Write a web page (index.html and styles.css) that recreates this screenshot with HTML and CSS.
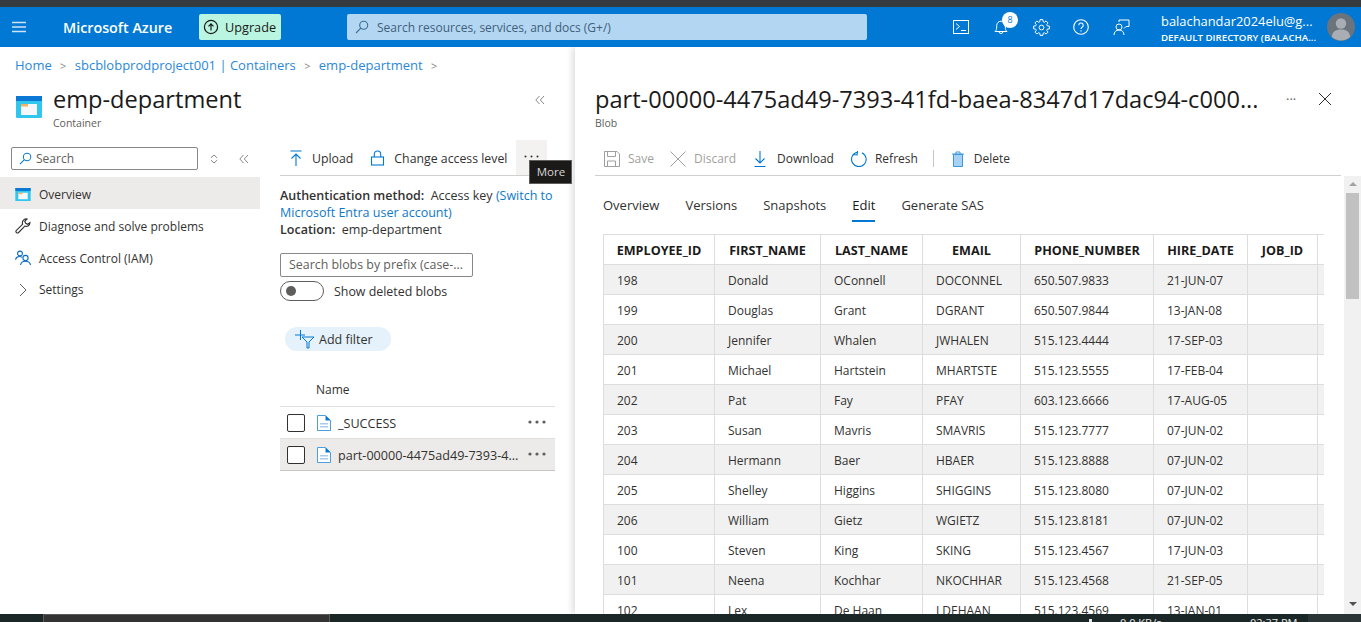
FILE: index.html
```html
<!DOCTYPE html>
<html lang="en">
<head>
  <meta charset="UTF-8">
  <title>emp-department - Microsoft Azure</title>
  <link rel="stylesheet" href="styles.css">
</head>
<body>
  <div class="topstrip"></div>
  <header class="topbar">
    <button class="hamburger" aria-label="Menu">
      <svg width="16" height="12" viewBox="0 0 16 12"><path d="M1 1.5h14M1 6h14M1 10.5h14" stroke="#cfe4f7" stroke-width="1.4"/></svg>
    </button>
    <div class="brand">Microsoft Azure</div>
    <div class="upgrade">
      <svg width="16" height="16" viewBox="0 0 16 16" fill="none" stroke="#1b1a19" stroke-width="1.2"><circle cx="8" cy="8" r="6.6"/><path d="M8 11.5V5M5.5 7.4 8 4.9l2.5 2.5"/></svg>
      <span>Upgrade</span>
    </div>
    <div class="globalsearch">
      <svg width="14" height="14" viewBox="0 0 14 14" fill="none" stroke="#3d6c94" stroke-width="1.1"><circle cx="8.7" cy="5.3" r="4"/><path d="M5.8 8.2 1 13"/></svg>
      <span>Search resources, services, and docs (G+/)</span>
    </div>
    <div class="topicons">
      <div class="topicon">
        <svg width="16" height="14" viewBox="0 0 16 14" fill="none" stroke="#fff" stroke-width="1"><rect x=".5" y=".5" width="15" height="13"/><path d="M3 3.5 6.5 6.5 3 9.5M8 10.5h5"/></svg>
      </div>
      <div class="topicon bell">
        <svg width="14" height="16" viewBox="0 0 14 16" fill="none" stroke="#fff" stroke-width="1"><path d="M1 12.5c1.3-1.2 1.7-2.4 1.7-4.5V6.5a4.3 4.3 0 0 1 8.6 0V8c0 2.1 .4 3.3 1.7 4.500zM5 12.5a2 2 0 0 0 4 0"/></svg>
        <span class="badge">8</span>
      </div>
      <div class="topicon">
        <svg width="17" height="17" viewBox="-8.5 -8.5 17 17" fill="none" stroke="#fff" stroke-width="1"><circle r="2.4"/><path d="M-1.66-5.77-1.39-7.88 1.39-7.88 1.66-5.77 2.91-5.25 4.59-6.55 6.55-4.59 5.25-2.91 5.77-1.66 7.88-1.39 7.88 1.39 5.77 1.66 5.25 2.91 6.55 4.59 4.59 6.55 2.91 5.25 1.66 5.77 1.39 7.88-1.39 7.88-1.66 5.77-2.91 5.25-4.59 6.55-6.55 4.59-5.25 2.91-5.77 1.66-7.88 1.39-7.88-1.39-5.77-1.66-5.25-2.91-6.55-4.59-4.59-6.55-2.91-5.25z" stroke-linejoin="round"/></svg>
      </div>
      <div class="topicon">
        <svg width="16" height="16" viewBox="0 0 16 16" fill="none" stroke="#fff" stroke-width="1.1"><circle cx="8" cy="8" r="7.3"/><path d="M5.8 6.2a2.200 2.200 0 1 1 3.400 1.900c-.8 .5-1.200 1-1.200 1.900"/><path d="M8 11.300v1.200"/></svg>
      </div>
      <div class="topicon">
        <svg width="17" height="17" viewBox="0 0 17 17" fill="none" stroke="#fff" stroke-width="1"><circle cx="6" cy="8" r="3"/><path d="M1 16c0-3 2-5 5-5s5 2 5 5M6 3V1h10v6.500h-3l-2 2"/></svg>
      </div>
    </div>
    <div class="account">
      <div class="account-name">balachandar2024elu@g...</div>
      <div class="account-dir">DEFAULT DIRECTORY (BALACHA...</div>
    </div>
    <div class="avatar">
      <svg width="28" height="28" viewBox="0 0 28 28"><circle cx="14" cy="14" r="14" fill="#6b737c"/><circle cx="14" cy="10.5" r="5.2" fill="#a9aeb4"/><path d="M4.800 24c.6-5.200 3.500-7.500 9.200-7.500s8.600 2.300 9.200 7.500a14 14 0 0 1-18.400 0z" fill="#a9aeb4"/></svg>
    </div>
  </header>

  <div class="main">
    <div class="leftside">
      <nav class="breadcrumb">
        <a>Home</a><span class="sep">&gt;</span>
        <a>sbcblobprodproject001 | Containers</a><span class="sep">&gt;</span>
        <a>emp-department</a><span class="sep">&gt;</span>
      </nav>
      <div class="bladehead">
        <svg class="bladeicon" width="26" height="22" viewBox="0 0 26 22"><rect width="26" height="22" rx="1" fill="#2fc7ee"/><rect width="26" height="5" fill="#0a78d4"/><rect x="5" y="8" width="16" height="11" fill="#f5f7f8"/><rect x="5" y="8" width="7" height="2.5" fill="#f2b25f"/></svg>
        <div class="bladetitle">
          <h1>emp-department</h1>
          <div class="subtitle">Container</div>
        </div>
        <div class="collapse">
          <svg width="10" height="10" viewBox="0 0 10 10" fill="none" stroke="#8a8886"><path d="M4.5 1 .8 5l3.700 4M9 1 5.300 5 9 9"/></svg>
        </div>
      </div>
      <div class="blade">
        <aside class="menu">
          <div class="menusearch">
            <div class="searchbox">
              <svg width="13" height="13" viewBox="0 0 14 14" fill="none" stroke="#0078d4" stroke-width="1.1"><circle cx="8.7" cy="5.3" r="4"/><path d="M5.8 8.2 1 13"/></svg>
              <span>Search</span>
            </div>
            <svg class="updown" width="8" height="10" viewBox="0 0 8 10" fill="none" stroke="#8a8886"><path d="M1 3.800 4 1l3 2.800M1 6.200 4 9l3-2.800"/></svg>
            <svg class="chev2" width="10" height="10" viewBox="0 0 10 10" fill="none" stroke="#8a8886"><path d="M4.5 1 .8 5l3.700 4M9 1 5.300 5 9 9"/></svg>
          </div>
          <div class="menuitem selected">
            <svg width="16" height="13" viewBox="0 0 26 22"><rect width="26" height="22" fill="#2fc7ee"/><rect width="26" height="5" fill="#0a78d4"/><rect x="5" y="8" width="16" height="11" fill="#f5f7f8"/><rect x="5" y="8" width="7" height="2.5" fill="#f2b25f"/></svg>
            <span>Overview</span>
          </div>
          <div class="menuitem">
            <svg width="16" height="16" viewBox="0 0 16 16" fill="none" stroke="#323130" stroke-width="1.1"><path d="M15 4.500a3.800 3.800 0 0 1-5.200 3.600L3.600 14.500a1.500 1.500 0 0 1-2.200-2.100l6.300-6.200A3.800 3.800 0 0 1 12 1l-2.300 2.300 1 2 2 1z"/></svg>
            <span>Diagnose and solve problems</span>
          </div>
          <div class="menuitem">
            <svg width="16" height="16" viewBox="0 0 16 16" fill="none" stroke="#0a6cc4" stroke-width="1.1"><circle cx="5" cy="3.5" r="2.4"/><path d="M.5 9.500c.5-2 2-3 4-3 1 0 1.800 .2 2.500 .8"/><circle cx="10.5" cy="8" r="2.6"/><path d="M5.500 15c.4-2.500 2.300-3.800 5-3.800s4.600 1.300 5 3.800"/></svg>
            <span>Access Control (IAM)</span>
          </div>
          <div class="menuitem short">
            <svg class="chevron" width="8" height="14" viewBox="0 0 8 14" fill="none" stroke="#605e5c" stroke-width="1"><path d="M1 1l6 6-6 6"/></svg>
            <span>Settings</span>
          </div>
        </aside>

        <section class="content">
          <div class="cmdbar">
            <div class="cmd">
              <svg width="14" height="16" viewBox="0 0 14 16" fill="none" stroke="#0078d4" stroke-width="1.1"><path d="M1.500 1h11M7 16V4M2.500 8.500 7 4l4.500 4.500"/></svg>
              <span>Upload</span>
            </div>
            <div class="cmd">
              <svg width="15" height="16" viewBox="0 0 15 16" fill="none" stroke="#0078d4" stroke-width="1.1"><rect x="1.5" y="7" width="12" height="8"/><path d="M4.300 7V4.200a3.200 3.200 0 0 1 6.400 0V7"/></svg>
              <span>Change access level</span>
            </div>
            <div class="cmd more">
              <svg width="15" height="3" viewBox="0 0 15 3" fill="#323130"><circle cx="1.5" cy="1.5" r="1"/><circle cx="7.5" cy="1.5" r="1"/><circle cx="13.5" cy="1.5" r="1"/></svg>
              <div class="tooltip">More</div>
            </div>
          </div>
          <div class="authinfo">
            <div><b>Authentication method:</b>&nbsp; Access key <a>(Switch to</a></div>
            <div><a>Microsoft Entra user account)</a></div>
            <div><b>Location:</b>&nbsp; emp-department</div>
          </div>
          <div class="prefix">Search blobs by prefix (case-...</div>
          <div class="toggleline">
            <span class="toggle"><i></i></span>
            <span>Show deleted blobs</span>
          </div>
          <div class="addfilter">
            <svg width="20" height="19" viewBox="0 0 20 19" fill="none" stroke="#0078d4" stroke-width="1"><path d="M5.500 0v10M0 5h10M7 7h12l-5 5v6h-2v-6z"/></svg>
            <span>Add filter</span>
          </div>
          <div class="bloblist">
            <div class="blobhead">Name</div>
            <div class="blobrow">
              <span class="check"></span>
              <svg width="14" height="16" viewBox="0 0 14 16"><path d="M.5 .5h8l5 5v10H.5z" fill="#fff" stroke="#4a9fe3"/><path d="M8.500 .5v5h5z" fill="#0a78d4"/><path d="M3 8h8v1.500H3zM3 11h8v1.500H3z" fill="#a6cdf0"/></svg>
              <span class="blobname">_SUCCESS</span>
              <svg class="dots" width="18" height="4" viewBox="0 0 18 4" fill="#605e5c"><circle cx="2" cy="2" r="1.600"/><circle cx="9" cy="2" r="1.600"/><circle cx="16" cy="2" r="1.600"/></svg>
            </div>
            <div class="blobrow selected">
              <span class="check"></span>
              <svg width="14" height="16" viewBox="0 0 14 16"><path d="M.5 .5h8l5 5v10H.5z" fill="#fff" stroke="#4a9fe3"/><path d="M8.500 .5v5h5z" fill="#0a78d4"/><path d="M3 8h8v1.500H3zM3 11h8v1.500H3z" fill="#a6cdf0"/></svg>
              <span class="blobname">part-00000-4475ad49-7393-4...</span>
              <svg class="dots" width="18" height="4" viewBox="0 0 18 4" fill="#605e5c"><circle cx="2" cy="2" r="1.600"/><circle cx="9" cy="2" r="1.600"/><circle cx="16" cy="2" r="1.600"/></svg>
            </div>
          </div>
        </section>
      </div>
    </div>

    <section class="panel">
      <div class="panelhead">
        <div class="paneltitle">
          <h2>part-00000-4475ad49-7393-41fd-baea-8347d17dac94-c000...</h2>
          <div class="subtitle">Blob</div>
        </div>
        <span class="panelmore">···</span>
        <svg class="panelclose" width="14" height="14" viewBox="0 0 14 14" fill="none" stroke="#323130"><path d="M1 1l12 12M13 1 1 13"/></svg>
      </div>
      <div class="paneltools">
        <div class="tool off">
          <svg width="16" height="16" viewBox="0 0 16 16" fill="none" stroke="#a19f9d"><path d="M.5 .5h12.500l2.500 2.500v12.500H.5z"/><path d="M3.500 .5v5h8v-5M3.500 15.500v-5.500h8v5.500"/></svg>
          <span>Save</span>
        </div>
        <div class="tool off">
          <svg width="16" height="16" viewBox="0 0 16 16" fill="none" stroke="#a19f9d"><path d="M.5 .5l15 15M15.500 .5l-15 15"/></svg>
          <span>Discard</span>
        </div>
        <div class="tool download">
          <svg width="12" height="16" viewBox="0 0 12 16" fill="none" stroke="#0078d4" stroke-width="1.1"><path d="M6 0v12M1.500 7.500 6 12l4.500-4.500M.5 15.500h11"/></svg>
          <span>Download</span>
        </div>
        <div class="tool refresh">
          <svg width="16" height="16" viewBox="0 0 16 16" fill="none" stroke="#0078d4" stroke-width="1.1"><path d="M10 1.300A7.300 7.300 0 1 1 5 1.600M5.500 .3v4h-4" transform="rotate(8 8 8)"/></svg>
          <span>Refresh</span>
        </div>
        <div class="divider"></div>
        <div class="tool delete">
          <svg width="14" height="16" viewBox="0 0 14 16"><path d="M1 3h12M5 3V1h4v2" fill="none" stroke="#3a96dd"/><path d="M2.500 3.500h9v12h-9z" fill="#a6d2f5" stroke="#3a96dd"/></svg>
          <span>Delete</span>
        </div>
      </div>
      <div class="panelbody">
        <div class="panelscroll">
          <div class="tabs">
            <span class="tab">Overview</span>
            <span class="tab">Versions</span>
            <span class="tab">Snapshots</span>
            <span class="tab active">Edit</span>
            <span class="tab">Generate SAS</span>
          </div>
          <div class="tablewrap">
            <table>
              <colgroup>
                <col class="c1"><col class="c2"><col class="c3"><col class="c4"><col class="c5"><col class="c6"><col class="c7"><col class="c8">
              </colgroup>
              <thead>
                <tr><th>EMPLOYEE_ID</th><th>FIRST_NAME</th><th>LAST_NAME</th><th>EMAIL</th><th>PHONE_NUMBER</th><th>HIRE_DATE</th><th>JOB_ID</th><th></th></tr>
              </thead>
              <tbody>
                <tr><td>198</td><td>Donald</td><td>OConnell</td><td>DOCONNEL</td><td>650.507.9833</td><td>21-JUN-07</td><td></td><td></td></tr>
                <tr><td>199</td><td>Douglas</td><td>Grant</td><td>DGRANT</td><td>650.507.9844</td><td>13-JAN-08</td><td></td><td></td></tr>
                <tr><td>200</td><td>Jennifer</td><td>Whalen</td><td>JWHALEN</td><td>515.123.4444</td><td>17-SEP-03</td><td></td><td></td></tr>
                <tr><td>201</td><td>Michael</td><td>Hartstein</td><td>MHARTSTE</td><td>515.123.5555</td><td>17-FEB-04</td><td></td><td></td></tr>
                <tr><td>202</td><td>Pat</td><td>Fay</td><td>PFAY</td><td>603.123.6666</td><td>17-AUG-05</td><td></td><td></td></tr>
                <tr><td>203</td><td>Susan</td><td>Mavris</td><td>SMAVRIS</td><td>515.123.7777</td><td>07-JUN-02</td><td></td><td></td></tr>
                <tr><td>204</td><td>Hermann</td><td>Baer</td><td>HBAER</td><td>515.123.8888</td><td>07-JUN-02</td><td></td><td></td></tr>
                <tr><td>205</td><td>Shelley</td><td>Higgins</td><td>SHIGGINS</td><td>515.123.8080</td><td>07-JUN-02</td><td></td><td></td></tr>
                <tr><td>206</td><td>William</td><td>Gietz</td><td>WGIETZ</td><td>515.123.8181</td><td>07-JUN-02</td><td></td><td></td></tr>
                <tr><td>100</td><td>Steven</td><td>King</td><td>SKING</td><td>515.123.4567</td><td>17-JUN-03</td><td></td><td></td></tr>
                <tr><td>101</td><td>Neena</td><td>Kochhar</td><td>NKOCHHAR</td><td>515.123.4568</td><td>21-SEP-05</td><td></td><td></td></tr>
                <tr><td>102</td><td>Lex</td><td>De Haan</td><td>LDEHAAN</td><td>515.123.4569</td><td>13-JAN-01</td><td></td><td></td></tr>
              </tbody>
            </table>
          </div>
        </div>
        <div class="scrollbar">
          <span class="arrow up"></span>
          <span class="thumb"></span>
          <span class="arrow down"></span>
        </div>
      </div>
    </section>
  </div>

  <footer class="taskbar">
    <div class="taskitem"></div>
    <div class="tray">
      <span class="trayicon"></span>
      <span class="trayspeed">0.0 KB/s</span>
      <span class="trayclock">02:37 PM</span>
      <span class="traybox"></span>
    </div>
  </footer>
</body>
</html>
```

FILE: styles.css
```css
* {
  box-sizing: border-box;
}
html, body {
  margin: 0;
  padding: 0;
}
body {
  width: 1361px;
  height: 622px;
  overflow: hidden;
  display: flex;
  flex-direction: column;
  font-family: "Open Sans", "Noto Sans", Arial, sans-serif;
  font-size: 12px;
  color: #323130;
  background: white;
}
a {
  color: #0f78c9;
}
svg {
  flex: none;
  display: block;
}

.topstrip {
  height: 7px;
  background: #353b3f;
}
.topbar {
  height: 40px;
  background: #0078d4;
  display: flex;
  align-items: center;
  color: white;
}
.hamburger {
  width: 38px;
  height: 40px;
  padding: 0 0 0 11px;
  background: none;
  border: none;
}
.brand {
  margin-left: 25px;
  width: 136px;
  font-size: 14.3px;
  font-weight: 600;
}
.upgrade {
  width: 82px;
  height: 26px;
  background: #b9f5e0;
  border-radius: 2px;
  color: #1b1a19;
  display: flex;
  align-items: center;
  gap: 6px;
  padding-left: 4px;
  font-size: 12.7px;
}
.globalsearch {
  margin-left: 66px;
  width: 520px;
  height: 26px;
  background: #b3d6f2;
  border-radius: 2px;
  color: #3f5f7a;
  display: flex;
  align-items: center;
  gap: 8px;
  padding-left: 8px;
}
.topicons {
  margin-left: 74px;
  display: flex;
}
.topicon {
  width: 40px;
  height: 40px;
  display: flex;
  align-items: center;
  justify-content: center;
  position: relative;
}
.badge {
  position: absolute;
  top: 5px;
  left: 21px;
  width: 16px;
  height: 16px;
  border-radius: 50%;
  background: white;
  color: #0078d4;
  font-size: 9px;
  text-align: center;
  line-height: 16px;
}
.account {
  margin-left: 20px;
  width: 166px;
  white-space: nowrap;
  padding-top: 2px;
}
.account-name {
  font-size: 12.9px;
  line-height: 18px;
}
.account-dir {
  font-size: 9.7px;
  font-weight: 600;
  line-height: 15px;
}

.main {
  flex: 1;
  min-height: 0;
  display: flex;
  overflow: hidden;
}
.leftside {
  width: 575px;
  flex: none;
}
.breadcrumb {
  height: 36px;
  padding-left: 15px;
  display: flex;
  align-items: center;
  font-size: 13px;
}
.breadcrumb a {
  color: #2b88d8;
}
.sep {
  width: 23px;
  text-align: center;
  color: #8a8886;
  font-size: 11px;
}
.bladehead {
  height: 57px;
  display: flex;
  align-items: flex-start;
  padding-left: 16px;
}
.bladeicon {
  margin: 13px 11px 0 0;
}
.bladetitle {
  width: 482px;
}
h1, h2 {
  margin: 0;
  font-size: 23.6px;
  font-weight: 500;
  line-height: 33px;
  color: #1b1a19;
}
.subtitle {
  font-size: 10.5px;
  line-height: 15px;
  color: #605e5c;
}
.collapse {
  margin-top: 12px;
}

.blade {
  display: flex;
}
.menu {
  width: 260px;
  flex: none;
}
.menusearch {
  height: 37px;
  padding: 7px 0 0 11px;
  display: flex;
  align-items: flex-start;
}
.searchbox {
  width: 187px;
  height: 23px;
  border: 1px solid #8a8886;
  border-radius: 2px;
  display: flex;
  align-items: center;
  gap: 4px;
  padding-left: 7px;
  color: #605e5c;
}
.updown {
  margin: 7px 0 0 12px;
}
.chev2 {
  margin: 7px 0 0 21px;
}
.menuitem {
  height: 32px;
  display: flex;
  align-items: center;
  gap: 8px;
  padding: 2px 0 0 15px;
}
.menuitem.selected {
  background: #edebe9;
}
.menuitem.short {
  height: 31px;
}
.chevron {
  margin: 0 4px;
}

.content {
  width: 275px;
  margin-left: 20px;
  flex: none;
}
.cmdbar {
  height: 36px;
  border-bottom: 1px solid #d2d0ce;
  display: flex;
  align-items: center;
  font-size: 12.3px;
}
.cmd {
  display: flex;
  align-items: center;
  gap: 9px;
  height: 35px;
  padding: 1px 9px 0;
}
.cmd + .cmd {
  padding-left: 8px;
}
.cmd.more {
  width: 31px;
  background: #f3f2f1;
  position: relative;
  padding: 0 0 1px;
  justify-content: center;
  margin-top: -1px;
}
.tooltip {
  position: absolute;
  left: 13px;
  top: 20px;
  width: 43px;
  height: 24px;
  background: #1b1a19;
  border: 1px solid #605e5c;
  color: #d6d6d6;
  font-size: 11.5px;
  text-align: center;
  line-height: 22px;
  z-index: 2;
}
.authinfo {
  margin-top: 11px;
  line-height: 17px;
  font-size: 12.5px;
  white-space: nowrap;
}
.authinfo b {
  font-weight: 600;
}
.prefix {
  margin-top: 15px;
  width: 193px;
  height: 24px;
  border: 1px solid #8a8886;
  border-radius: 2px;
  line-height: 22px;
  padding-left: 8px;
  color: #605e5c;
  white-space: nowrap;
  font-size: 12.4px;
}
.toggleline {
  margin-top: 4px;
  display: flex;
  align-items: center;
  gap: 10px;
  height: 20px;
  font-size: 12.4px;
}
.toggle {
  width: 44px;
  height: 20px;
  border: 1px solid #605e5c;
  border-radius: 10px;
  display: block;
  padding: 4px 0 0 5px;
}
.toggle i {
  display: block;
  width: 10px;
  height: 10px;
  border-radius: 50%;
  background: #605e5c;
}
.addfilter {
  margin: 26px 0 0 5px;
  width: 106px;
  height: 24px;
  background: #e5f1fb;
  border-radius: 12px;
  display: flex;
  align-items: center;
  gap: 4px;
  padding-left: 10px;
  font-size: 12.5px;
}
.bloblist {
  margin-top: 21px;
}
.blobhead {
  height: 35px;
  padding: 9px 0 0 36px;
  border-bottom: 1px solid #e1dfdd;
  font-weight: 500;
}
.blobrow {
  height: 32px;
  display: flex;
  align-items: center;
  padding: 1px 9px 0 7px;
  border-bottom: 1px solid #e1dfdd;
}
.blobrow.selected {
  background: #edebe9;
  border-bottom-color: #c8c6c4;
}
.check {
  width: 18px;
  height: 18px;
  border: 1px solid #323130;
  border-radius: 2px;
  background: white;
  margin-right: 12px;
}
.blobname {
  margin-left: 7px;
  white-space: nowrap;
  font-size: 12.6px;
}
.dots {
  margin-left: auto;
  margin-top: -2px;
}

.panel {
  width: 786px;
  flex: none;
  box-shadow: -3px 0 6px rgba(0, 0, 0, 0.12);
  position: relative;
  z-index: 1;
  display: flex;
  flex-direction: column;
  min-height: 0;
}
.panelhead {
  height: 93px;
  padding: 36px 0 0 20px;
  display: flex;
  align-items: flex-start;
}
.paneltitle {
  width: 690px;
}
.paneltitle h2 {
  white-space: nowrap;
}
.panelmore {
  margin-top: 6px;
  color: #605e5c;
  font-size: 13px;
  line-height: 20px;
  width: 32px;
  margin-left: 1px;
}
.panelclose {
  margin-top: 9px;
}
.paneltools {
  margin-left: 20px;
  width: 746px;
  height: 36px;
  border-bottom: 1px solid #d2d0ce;
  display: flex;
  align-items: center;
  padding: 2px 0 0 9px;
  gap: 16px;
}
.tool {
  display: flex;
  align-items: center;
  gap: 8px;
}
.tool.off {
  color: #a19f9d;
}
.tool.download {
  margin-left: 2px;
  gap: 11px;
}
.tool.refresh {
  margin-left: 1px;
}
.tool.delete {
  margin-left: 1px;
  gap: 9px;
}
.divider {
  width: 1px;
  height: 17px;
  margin-left: -1px;
  background: #c8c6c4;
}
.panelbody {
  flex: 1;
  min-height: 0;
  display: flex;
  justify-content: space-between;
}
.panelscroll {
  width: 769px;
  overflow: hidden;
}
.tabs {
  margin: 20px 0 0 28px;
  height: 26px;
  display: flex;
  gap: 26px;
  font-size: 13px;
}
.tab {
  height: 26px;
}
.tab.active {
  font-weight: 500;
  border-bottom: 2px solid #0078d4;
  color: #1b1a19;
}
.tablewrap {
  margin: 12px 0 0 28px;
  width: 721px;
  overflow: hidden;
}
table {
  border-collapse: collapse;
  table-layout: fixed;
  width: 721px;
}
.c1 { width: 111px; }
.c2 { width: 106px; }
.c3 { width: 102px; }
.c4 { width: 98px; }
.c5 { width: 133px; }
.c6 { width: 94px; }
.c7 { width: 70px; }
.c8 { width: 7px; }
th, td {
  height: 30px;
  border: 1px solid #dddddd;
  padding: 1px 0 0 13px;
  text-align: left;
  white-space: nowrap;
  overflow: hidden;
}
th {
  padding: 2px 0 0;
  text-align: center;
  font-weight: 700;
  font-size: 12.6px;
  color: #1b1a19;
}
tbody tr:nth-child(odd) {
  background: #f1f1f1;
}

.scrollbar {
  width: 17px;
  background: #f1f1f1;
  display: flex;
  flex-direction: column;
  align-items: center;
  padding-top: 6px;
}
.arrow {
  width: 0;
  height: 0;
  border-left: 4px solid transparent;
  border-right: 4px solid transparent;
}
.arrow.up {
  border-bottom: 4px solid #a3a3a3;
}
.arrow.down {
  border-top: 4px solid #505050;
  margin-top: 303px;
}
.thumb {
  width: 13px;
  height: 106px;
  background: #c1c1c1;
  margin-top: 7px;
}

.taskbar {
  height: 8px;
  flex: none;
  background: #1b2626;
  display: flex;
  overflow: hidden;
  position: relative;
  z-index: 3;
}
.taskitem {
  margin-left: 43px;
  width: 287px;
  background: #333333;
  border: 1px solid #5a5a5a;
  border-bottom: none;
}
.tray {
  flex: 1;
  display: flex;
  color: #e8e8e8;
  font-size: 11px;
  line-height: 18px;
}
.trayicon {
  margin: 5px 0 0 759px;
  width: 3px;
  height: 3px;
  background: #e8e8e8;
}
.trayspeed {
  margin-left: 28px;
  width: 130px;
}
.trayclock {
  width: 58px;
}
.traybox {
  flex: 1;
  background: #2b3434;
}
```
